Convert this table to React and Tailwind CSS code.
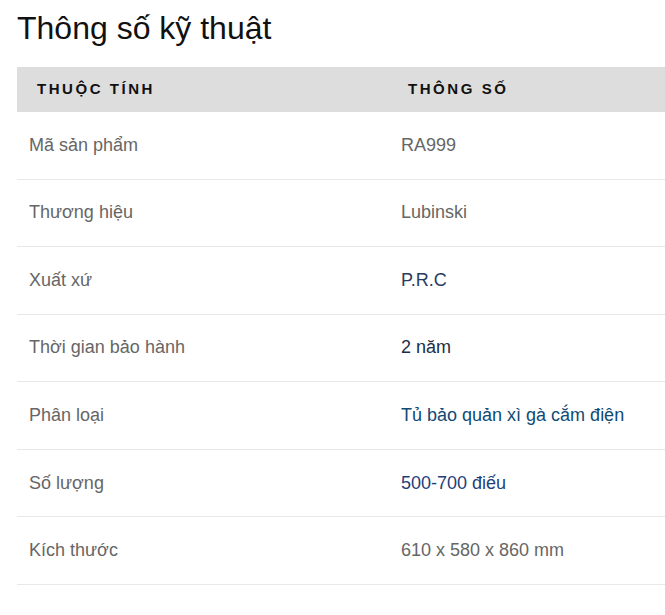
export default function App() {
  const rows = [
    ["Mã sản phẩm", "RA999", "text-[#666666]"],
    ["Thương hiệu", "Lubinski", "text-[#666666]"],
    ["Xuất xứ", "P.R.C", "text-[#283c62]"],
    ["Thời gian bảo hành", "2 năm", "text-[#1d2d48]"],
    ["Phân loại", "Tủ bảo quản xì gà cắm điện", "text-[#0f4a75]"],
    ["Số lượng", "500-700 điếu", "text-[#1f3f7a]"],
    ["Kích thước", "610 x 580 x 860 mm", "text-[#666666]"],
  ];
  return (
    <div className="bg-white min-h-[615px] pl-[17px] pt-[10px] font-['Liberation_Sans',Arial,sans-serif] overflow-hidden">
      <h2 className="text-[32px] leading-[36px] text-[#111111] font-normal">Thông số kỹ thuật</h2>
      <div className="mt-[21px] w-[660px]">
        <div className="grid grid-cols-[372px_1fr] bg-[#dddddd] h-[45px] items-center">
          <div className="pl-[20px] text-[15px] font-bold tracking-[0.17em] text-[#111111]">THUỘC TÍNH</div>
          <div className="pl-[19px] text-[15px] font-bold tracking-[0.17em] text-[#111111]">THÔNG SỐ</div>
        </div>
        {rows.map(([k, v, c]) => (
          <div key={k} className="grid grid-cols-[372px_1fr] h-[67.57px] items-center border-b border-[#e8e8e8] text-[18px]">
            <div className="pl-[12px] text-[#666666]">{k}</div>
            <div className={`pl-[12px] ${c}`}>{v}</div>
          </div>
        ))}
      </div>
    </div>
  );
}
